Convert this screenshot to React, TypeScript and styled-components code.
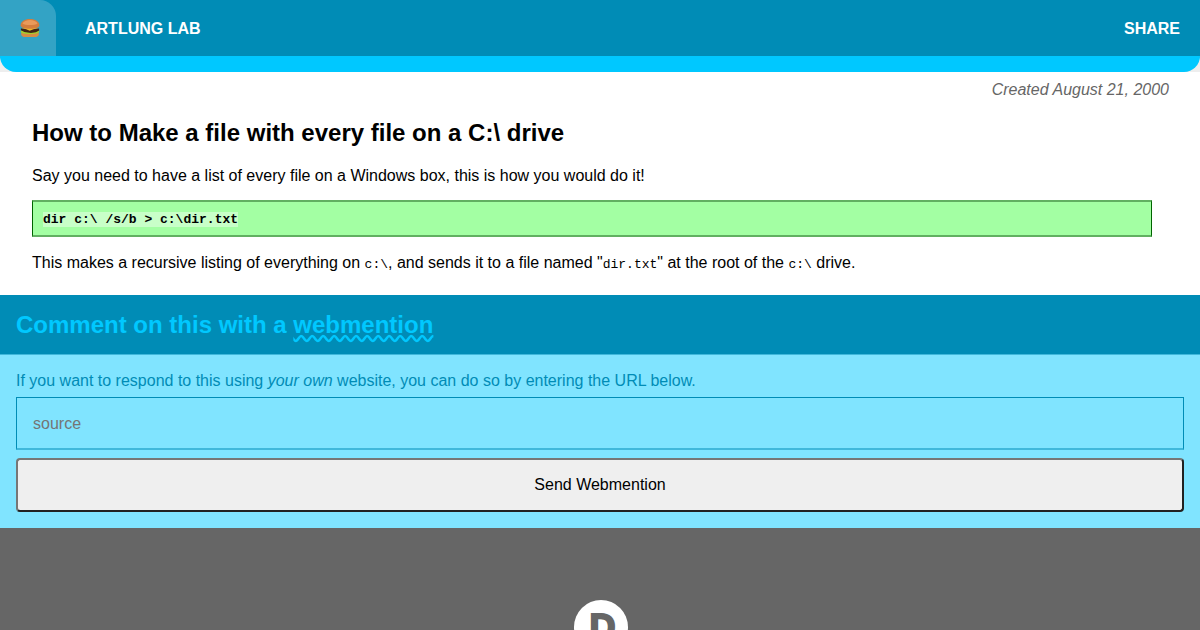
import React from "react";
import styled, { createGlobalStyle } from "styled-components";

const Global = createGlobalStyle`
  * { box-sizing: border-box; }
  html, body { margin: 0; padding: 0; }
  body {
    font: 16px/24px "Liberation Sans", Arial, sans-serif;
    color: #000;
    background: #fff;
    overflow: hidden;
  }
`;
const Page = styled.div`
  height: 630px;
  overflow: hidden;
  display: flex;
  flex-direction: column;
`;
const Header = styled.header`
  height: 72px;
  flex: none;
  background: #eee;
`;
const HeaderInner = styled.div`
  height: 72px;
  border-bottom: 16px solid #00c8ff;
  border-radius: 0 0 16px 16px;
  background: #008cb6;
  display: flex;
  align-items: center;
  color: #fff;
  font-weight: bold;
`;
const MenuButton = styled.div`
  width: 56px;
  height: 56px;
  padding: 0 0 1px 4px;
  border-top-right-radius: 16px;
  background: #33a3c5;
  display: flex;
  align-items: center;
  justify-content: center;
`;
const SiteName = styled.div`
  flex: 1;
  padding: 2px 0 0 29px;
`;
const Share = styled.div`
  padding: 2px 20px 0 0;
`;
const Article = styled.main`
  height: 223px;
  flex: none;
  padding: 6px 32px 0;
`;
const Created = styled.div`
  margin-right: -1px;
  text-align: right;
  font-style: italic;
  color: #666;
  height: 24px;
`;
const Title = styled.h1`
  margin: 15px 0 0;
  font-size: 24px;
  line-height: 32px;
`;
const Para = styled.p<{ $top: number }>`
  margin: ${(p) => p.$top}px 0 0;
  line-height: 24px;
`;
const Pre = styled.pre`
  margin: 12px 16px 0 0;
  height: 37px;
  padding: 1px 10px 0;
  border: solid;
  border-width: 2px 1px;
  border-color: #61b061 #006400;
  background: #a3ffa3;
  display: flex;
  align-items: center;
`;
const Command = styled.code`
  font: bold 13px/15px "Liberation Mono", monospace;
  background: #c8ffc8;
`;
const Code = styled.code`
  font: 13px "Liberation Mono", monospace;
`;
const CommentHead = styled.h2`
  margin: 0;
  height: 60px;
  flex: none;
  padding: 0 16px;
  background: #008cb6;
  border-bottom: 1px solid #40b8db;
  color: #00c8ff;
  font-size: 24px;
  line-height: 60px;
`;
const Webmention = styled.a`
  text-decoration: underline wavy;
  text-decoration-skip-ink: none;
`;
const Form = styled.form`
  flex: none;
  height: 173px;
  padding: 14px 16px 0;
  background: #80e4ff;
  color: #008cb6;
  display: flex;
  flex-direction: column;
`;
const Hint = styled.label`
  height: 28px;
`;
const Source = styled.input`
  height: 53px;
  padding: 2px 16px 0;
  border: 1px solid #008cb6;
  border-bottom: 2px solid #40b8db;
  border-radius: 0;
  background: transparent;
  font: 16px "Liberation Sans", Arial, sans-serif;
  &::placeholder { color: #757575; }
`;
const Send = styled.button`
  margin-top: 8px;
  height: 54px;
  border: 2px solid;
  border-color: #767676 #212121 #212121 #767676;
  border-radius: 4px;
  background: #efefef;
  color: #000;
  font: 16px "Liberation Sans", Arial, sans-serif;
`;
const Footer = styled.footer`
  flex: 1;
  background: #666;
  padding: 72px 0 0 2px;
  display: flex;
  justify-content: center;
  overflow: hidden;
`;
const Logo = styled.div`
  width: 54px;
  height: 54px;
  flex: none;
  padding: 1px 0 0 3px;
  border-radius: 50%;
  background: #fff;
  color: #666;
  text-align: center;
  font-size: 36px;
  font-weight: bold;
  line-height: 54px;
  -webkit-text-stroke: 2px #666;
`;

const Burger = () => (
  <svg width="20" height="20" viewBox="0 0 20 20">
    <path d="M1.2 14.5h17.6v1.7c0 1.9-1.8 2.8-4 2.8H5.2c-2.2 0-4-.9-4-2.8z" fill="#d58d45" />
    <path d="M.7 12.4h18.6l-.4 2.1-3 .9-3.5.6-4.5.1-4.5-.7-2.4-1z" fill="#a4cf2d" />
    <path d="M.9 10.6h18.2v1.8l-3.2 1.8-5 .7-6.5-.9-3.5-1.8z" fill="#3f2417" />
    <path d="M1.5 10h17l-5 1.2-3.8 1.6-3.5-1.5z" fill="#efb72e" />
    <path d="M.6 7.4C.6 3.6 4.5 1 10 1s9.4 2.6 9.4 6.4c0 2-3.9 3.3-9.4 3.3S.6 9.4.6 7.4z" fill="#d47d3d" />
    <path d="M2.5 5.5c2-4.7 13-4.7 15 0-2.5 2-12.5 2-15 0z" fill="#ea9a5a" />
  </svg>
);

export default function App() {
  return (
    <>
      <Global />
      <Page>
        <Header>
          <HeaderInner>
            <MenuButton><Burger /></MenuButton>
            <SiteName>ARTLUNG LAB</SiteName>
            <Share>SHARE</Share>
          </HeaderInner>
        </Header>
        <Article>
          <Created>Created August 21, 2000</Created>
          <Title>How to Make a file with every file on a C:\ drive</Title>
          <Para $top={15}>Say you need to have a list of every file on a Windows box, this is how you would do it!</Para>
          <Pre><Command>{"dir c:\\ /s/b > c:\\dir.txt"}</Command></Pre>
          <Para $top={14}>
            This makes a recursive listing of everything on <Code>c:\</Code>, and sends it to a file named "<Code>dir.txt</Code>" at the root of the <Code>c:\</Code> drive.
          </Para>
        </Article>
        <CommentHead>Comment on this with a <Webmention>webmention</Webmention></CommentHead>
        <Form>
          <Hint>If you want to respond to this using <em>your own</em> website, you can do so by entering the URL below.</Hint>
          <Source placeholder="source" />
          <Send type="button">Send Webmention</Send>
        </Form>
        <Footer>
          <Logo>D</Logo>
        </Footer>
      </Page>
    </>
  );
}
